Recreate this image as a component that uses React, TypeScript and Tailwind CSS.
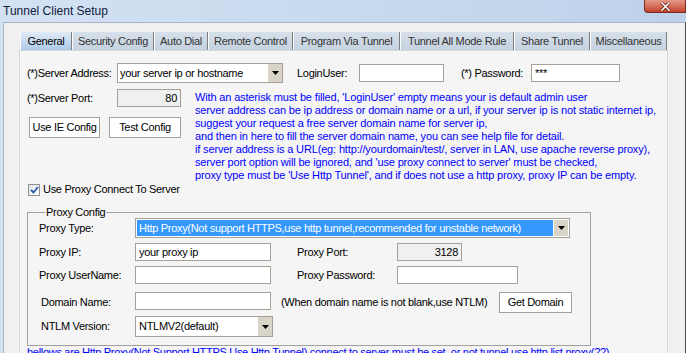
import React from 'react';

const tabs = [
  { label: 'General', w: 'w-[52px]', active: true },
  { label: 'Security Config', w: 'w-[82px]' },
  { label: 'Auto Dial', w: 'w-[54px]' },
  { label: 'Remote Control', w: 'w-[85px]' },
  { label: 'Program Via Tunnel', w: 'w-[107px]' },
  { label: 'Tunnel All Mode Rule', w: 'w-[114px]' },
  { label: 'Share Tunnel', w: 'w-[76px]' },
  { label: 'Miscellaneous', w: 'w-[77px]' },
];

const notes = [
  "With an asterisk must be filled, 'LoginUser' empty means your is default admin user",
  'server address can be ip address or domain name or a url, if your server ip is not static internet ip,',
  'suggest your request a free server domain name for server ip,',
  'and then in here to fill the server domain name, you can see help file for detail.',
  'if server address is a URL(eg: http://yourdomain/test/, server in LAN, use apache reverse proxy),',
  "server port option will be ignored, and 'use proxy connect to server' must be checked,",
  "proxy type must be 'Use Http Tunnel', and if does not use a http proxy, proxy IP can be empty.",
];

const Arrow = () => (
  <div className="w-[14px] self-stretch bg-[#d8d4c8] flex items-center justify-center">
    <svg width="7" height="4" viewBox="0 0 7 4">
      <path d="M0 0h7L3.5 4z" fill="#000" />
    </svg>
  </div>
);

const Input: React.FC<{ w: string; value?: string; grey?: boolean }> = ({ w, value, grey }) => (
  <div
    className={`${w} h-[18px] border border-[#a59f95] flex items-center px-[3px] ${
      grey ? 'bg-[#f0f0f0] justify-end' : 'bg-white'
    }`}
  >
    {value}
  </div>
);

const Btn: React.FC<{ w: string; label: string }> = ({ w, label }) => (
  <div className={`${w} h-[21px] border border-[#a59f95] bg-white flex items-center justify-center`}>{label}</div>
);

export default function App() {
  return (
    <div className="w-[686px] h-[353px] overflow-hidden flex flex-col bg-gradient-to-r from-[#d3e2f3] to-[#bdd2ea] font-['Liberation_Sans',Arial,sans-serif] text-black">
      {/* title bar */}
      <div className="h-[22px] shrink-0 relative flex items-center pl-[3px] text-[12px] text-[#10203a]">
        Tunnel Client Setup
        <div className="absolute right-0 top-0 w-[42px] h-[13px] rounded-bl-[4px] border border-t-0 border-[#7a2a1e] bg-gradient-to-b from-[#e59a88] to-[#c2412a] flex items-center justify-center">
          <svg width="11" height="9" viewBox="0 0 11 9">
            <path d="M1.5 0.5l8 8M9.5 0.5l-8 8" stroke="#5a1a10" strokeWidth="3" />
            <path d="M1.5 0.5l8 8M9.5 0.5l-8 8" stroke="#fff" strokeWidth="1.6" />
          </svg>
        </div>
      </div>

      <div className="flex-1 min-h-0 flex pl-[3px]">
        <div className="flex-1 flex flex-col bg-[#f0f0f0] border-l border-t border-[#a7b5c6] border-r border-r-[#4a4a4a] pt-[9px] pl-[15px] pr-[17px] text-[11px] tracking-[-0.3px]">
          {/* tabs */}
          <div className="flex h-[18px] shrink-0 pl-[1px]">
            {tabs.map((t) => (
              <div
                key={t.label}
                className={`${t.w} h-full flex items-center justify-center border-l border-l-[#fbfbfb] border-r border-r-[#7d7d7d] whitespace-nowrap ${
                  t.active
                    ? 'bg-gradient-to-b from-[#dfeaf6] to-[#aecae8] text-black'
                    : 'bg-gradient-to-b from-[#d6e0ea] to-[#c5d2df] text-[#333]'
                }`}
              >
                {t.label}
              </div>
            ))}
          </div>

          {/* panel */}
          <div className="flex-1 shrink-0 bg-[#f5f5f5] border border-[#d9d9d9] pt-[12px] pl-[7px]">
            {/* row 1 */}
            <div className="flex items-center h-[20px]">
              <div className="w-[90px] whitespace-nowrap">(*)Server Address:</div>
              <div className="w-[166px] h-[20px] border border-[#a59f95] bg-white flex">
                <div className="flex-1 flex items-center px-[2px]">your server ip or hostname</div>
                <Arrow />
              </div>
              <div className="ml-[14px] w-[62px]">LoginUser:</div>
              <Input w="w-[85px]" />
              <div className="ml-[17px] w-[70px] whitespace-nowrap">(*) Password:</div>
              <Input w="w-[89px]" value="***" />
            </div>

            {/* row 2 */}
            <div className="flex mt-[6px]">
              <div className="w-[168px]">
                <div className="flex items-center">
                  <div className="w-[90px]">(*)Server Port:</div>
                  <Input w="w-[64px]" value="80" grey />
                </div>
                <div className="flex gap-[9px] mt-[10px] pl-[2px]">
                  <Btn w="w-[71px]" label="Use IE Config" />
                  <Btn w="w-[72px]" label="Test Config" />
                </div>
              </div>
              <div className="mt-[2px] leading-[13px] text-[#0000ff] tracking-[-0.15px]">
                {notes.map((n) => (
                  <div key={n} className="whitespace-nowrap">{n}</div>
                ))}
              </div>
            </div>

            {/* checkbox */}
            <div className="flex items-center mt-[1px] pl-[1px] h-[13px]">
              <div className="w-[12px] h-[12px] border border-[#8f8f8f] bg-gradient-to-br from-[#e4e4e4] to-white flex items-center justify-center">
                <svg width="9" height="8" viewBox="0 0 9 8">
                  <path d="M1 4l2.5 2.5L8 1" stroke="#2456a8" strokeWidth="1.8" fill="none" />
                </svg>
              </div>
              <div className="ml-[3px]">Use Proxy Connect To Server</div>
            </div>

            {/* proxy config group */}
            <fieldset className="mt-[11px] w-[564px] border border-[#a0a0a0] pl-[11px] pb-[8px]">
              <legend className="ml-[6px] px-[1px] leading-[11px]">Proxy Config</legend>

              <div className="flex items-center">
                <div className="w-[96px]">Proxy Type:</div>
                <div className="w-[435px] h-[20px] border border-[#a59f95] bg-white flex p-[1px]">
                  <div className="flex-1 bg-[#3399ff] text-white flex items-center px-[2px] whitespace-nowrap">
                    Http Proxy(Not support HTTPS,use http tunnel,recommended for unstable network)
                  </div>
                  <div className="w-[1px]" />
                  <Arrow />
                </div>
              </div>

              <div className="flex items-center mt-[5px]">
                <div className="w-[96px]">Proxy IP:</div>
                <Input w="w-[136px]" value="your proxy ip" />
                <div className="ml-[26px] w-[100px]">Proxy Port:</div>
                <Input w="w-[65px]" value="3128" grey />
              </div>

              <div className="flex items-center mt-[5px]">
                <div className="w-[96px]">Proxy UserName:</div>
                <Input w="w-[136px]" />
                <div className="ml-[26px] w-[100px]">Proxy Password:</div>
                <Input w="w-[121px]" />
              </div>

              <div className="flex items-start mt-[8px]">
                <div className="w-[96px] pl-[2px] h-[21px] flex items-center">Domain Name:</div>
                <Input w="w-[136px]" />
                <div className="ml-[10px] w-[218px] h-[21px] flex items-center whitespace-nowrap">
                  (When domain name is not blank,use NTLM)
                </div>
                <Btn w="w-[73px]" label="Get Domain" />
              </div>

              <div className="flex items-center mt-[3px]">
                <div className="w-[96px] pl-[2px]">NTLM Version:</div>
                <div className="w-[138px] h-[21px] border border-[#a59f95] bg-white flex">
                  <div className="flex-1 flex items-center px-[3px]">NTLMV2(default)</div>
                  <Arrow />
                </div>
              </div>
            </fieldset>

            <div className="text-[#0000ff] whitespace-nowrap leading-[13px]">
              bellows are Http Proxy(Not Support HTTPS,Use Http Tunnel) connect to server must be set, or not tunnel,use http list proxy(??)
            </div>
          </div>
        </div>
      </div>
    </div>
  );
}
